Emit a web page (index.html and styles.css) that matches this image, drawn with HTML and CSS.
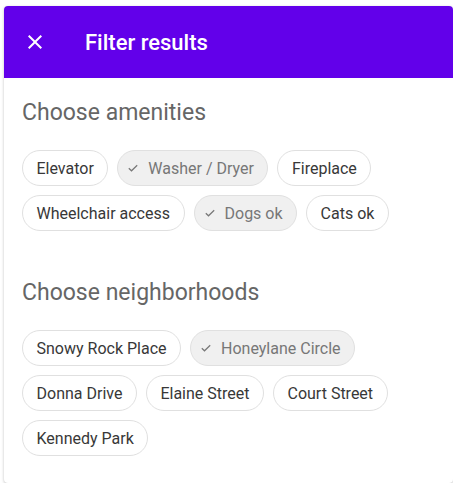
FILE: index.html
```html
<!DOCTYPE html>
<html>
<head>
<meta charset="utf-8">
<link rel="stylesheet" href="styles.css">
</head>
<body>
<div class="card">
  <header class="bar">
    <svg class="close" viewBox="0 0 24 24" width="24" height="24"><path fill="#fff" d="M19 6.41L17.59 5 12 10.59 6.41 5 5 6.41 10.59 12 5 17.59 6.41 19 12 13.41 17.59 19 19 17.59 13.41 12z"/></svg>
    <h1 class="title">Filter results</h1>
  </header>
  <div class="content">
    <section class="group">
      <h2 class="heading">Choose amenities</h2>
      <div class="chips">
        <span class="chip">Elevator</span>
        <span class="chip selected"><svg class="check" viewBox="0 0 10 8" width="10" height="8"><polyline points="0.8,4.2 3.5,6.8 9.2,1.2" fill="none" stroke="#777" stroke-width="1.2"/></svg>Washer / Dryer</span>
        <span class="chip">Fireplace</span>
        <span class="chip">Wheelchair access</span>
        <span class="chip selected"><svg class="check" viewBox="0 0 10 8" width="10" height="8"><polyline points="0.8,4.2 3.5,6.8 9.2,1.2" fill="none" stroke="#777" stroke-width="1.2"/></svg>Dogs ok</span>
        <span class="chip">Cats ok</span>
      </div>
    </section>
    <section class="group">
      <h2 class="heading">Choose neighborhoods</h2>
      <div class="chips">
        <span class="chip">Snowy Rock Place</span>
        <span class="chip selected"><svg class="check" viewBox="0 0 10 8" width="10" height="8"><polyline points="0.8,4.2 3.5,6.8 9.2,1.2" fill="none" stroke="#777" stroke-width="1.2"/></svg>Honeylane Circle</span>
        <span class="chip">Donna Drive</span>
        <span class="chip">Elaine Street</span>
        <span class="chip">Court Street</span>
        <span class="chip">Kennedy Park</span>
      </div>
    </section>
  </div>
</div>
</body>
</html>
```
FILE: styles.css
```css
html, body {
  margin: 0;
  padding: 0;
  background: #fff;
}
body {
  font-family: Roboto, "Liberation Sans", sans-serif;
}
.card {
  margin: 6px 0 0 4px;
  width: 449px;
  height: 477px;
  border-radius: 4px;
  background: #fff;
  box-shadow: 0 1px 3px rgba(0,0,0,0.25);
  overflow: hidden;
  box-sizing: border-box;
}
.bar {
  height: 72px;
  background: #6200ea;
  display: flex;
  align-items: center;
  padding-left: 19px;
}
.close {
  display: block;
  flex: none;
}
.title {
  margin: 0 0 0 38px;
  font-size: 22px;
  font-weight: 500;
  color: #fff;
}
.content {
  padding: 21px 18px 0 18px;
}
.group {
  margin-bottom: 48px;
}
.heading {
  margin: 0;
  font-size: 23px;
  font-weight: 400;
  color: #666;
  line-height: 28px;
}
.chips {
  display: flex;
  flex-wrap: wrap;
  gap: 9px;
  margin-top: 23px;
}
.chip {
  box-sizing: border-box;
  height: 36px;
  display: inline-flex;
  align-items: center;
  padding: 0 13.5px;
  border: 1px solid #e0e0e0;
  border-radius: 18px;
  font-size: 16px;
  color: #383838;
  white-space: nowrap;
}
.chip.selected {
  background: #f0f0f0;
  color: #777;
  padding-left: 10px;
}
.check {
  display: block;
  margin-right: 10px;
}
```
